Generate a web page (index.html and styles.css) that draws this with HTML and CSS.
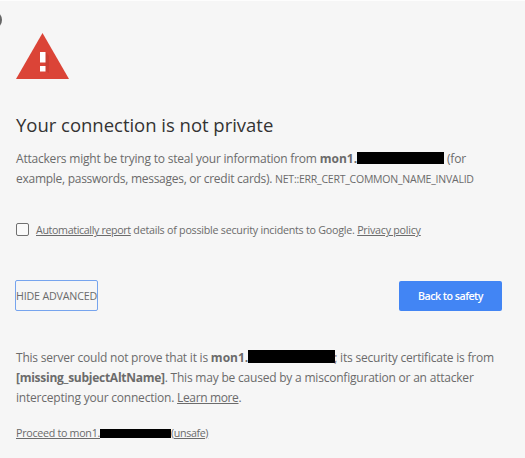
FILE: index.html
```html
<!DOCTYPE html>
<html lang="en">
<head>
    <meta charset="UTF-8">
    <meta name="viewport" content="width=device-width, initial-scale=1.0">
    <title>Privacy error</title>
    <link rel="stylesheet" href="styles.css">
</head>
<body>
    <div class="corner"></div>
    <main>
        <svg class="icon" viewBox="0 0 53 46" width="53" height="46">
            <path d="M26.500 0L53 46H0z" fill="#db4437"/>
            <path d="M29.500 19L33 23V40L29.500 38z" fill="#b93a2f" opacity=".5"/>
            <path d="M24 19h5.500v10.500h-5.500zM24 33h5.500v5.500h-5.500z" fill="#fff"/>
        </svg>
        <h1>Your connection is not private</h1>
        <p class="text">
            Attackers might be trying to steal your information from <b>mon1.</b><i class="redacted"></i> (for<br>
            <span class="tight">example, passwords, messages, or credit cards). </span><span class="code">NET::ERR_CERT_COMMON_NAME_INVALID</span>
        </p>
        <div class="report">
            <span class="checkbox"></span>
            <label><a class="tighter" href="#">Automatically report</a> details of possible security incidents to Google. <a href="#">Privacy policy</a></label>
        </div>
        <div class="buttons">
            <button class="advanced">HIDE ADVANCED</button>
            <button class="safety">Back to safety</button>
        </div>
        <p class="text details">
            This server could not prove that it is <b>mon1.</b><i class="redacted"></i><span class="semi">;</span> its security certificate is from<br>
            <b class="tight">[missing_subjectAltName]</b>. This may be caused by a misconfiguration or an attacker<br>
            intercepting your connection. <a class="tighter" href="#">Learn more</a>.
        </p>
        <a class="proceed" href="#">Proceed to mon1.<i class="redacted small"></i><span class="tighter">(unsafe)</span></a>
    </main>
</body>
</html>
```
FILE: styles.css
```css
body {
    margin: 0;
    height: 458px;
    overflow: hidden;
    box-sizing: border-box;
    border-top: 1px solid #fdfdfd;
    background: #f6f6f6;
    color: #6b6b6b;
    font-family: "Open Sans", "Noto Sans", sans-serif;
    font-size: 12px;
}
main { padding: 32px 23px 0 16px; white-space: nowrap; }
.corner {
    position: absolute;
    left: -16px;
    top: 11px;
    width: 18px;
    height: 18px;
    border-radius: 50%;
    background: #666;
}
.icon { display: block; }
h1 {
    margin: 33px 0 0;
    color: #333;
    font-size: 18.5px;
    font-weight: 400;
    line-height: 26px;
    letter-spacing: -0.02px;
}
a { color: inherit; text-decoration: underline; }
b { letter-spacing: 0; }
.text {
    margin: 11px 0 0;
    line-height: 19.7px;
    letter-spacing: -0.21px;
}
.tight { letter-spacing: -0.27px; }
.tighter { letter-spacing: -0.36px; }
.redacted {
    display: inline-block;
    width: 87px;
    height: 12px;
    background: #000;
    vertical-align: -1px;
}
.semi { margin-left: -1px; }
.code { font-size: 10.5px; letter-spacing: -0.23px; }
.report {
    display: flex;
    align-items: center;
    gap: 7px;
    height: 16px;
    margin-top: 33px;
    font-size: 10.7px;
    letter-spacing: -0.235px;
}
.checkbox {
    box-sizing: border-box;
    width: 13px;
    height: 13px;
    margin-bottom: 2px;
    border: 1px solid #707070;
    border-radius: 2px;
    background: #fafafa;
}
.buttons {
    display: flex;
    justify-content: space-between;
    margin-top: 42px;
}
button {
    padding: 0;
    height: 30px;
    border: none;
    border-radius: 2px;
    font-family: inherit;
    font-size: 10.7px;
}
.advanced {
    width: 83px;
    height: 31px;
    margin-left: -1px;
    border: 1px solid #76a4ee;
    background: none;
    color: #6b6b6b;
    letter-spacing: -0.18px;
}
.safety {
    width: 103px;
    margin-top: 1px;
    background: #4285f4;
    color: #fff;
    font-weight: 600;
    letter-spacing: -0.52px;
}
.details { margin-top: 37px; }
.details .redacted { height: 13px; }
.proceed {
    display: block;
    margin-top: 17px;
    font-size: 10.7px;
    line-height: 16px;
    letter-spacing: -0.28px;
}
.small { width: 71px; height: 9px; }
```
